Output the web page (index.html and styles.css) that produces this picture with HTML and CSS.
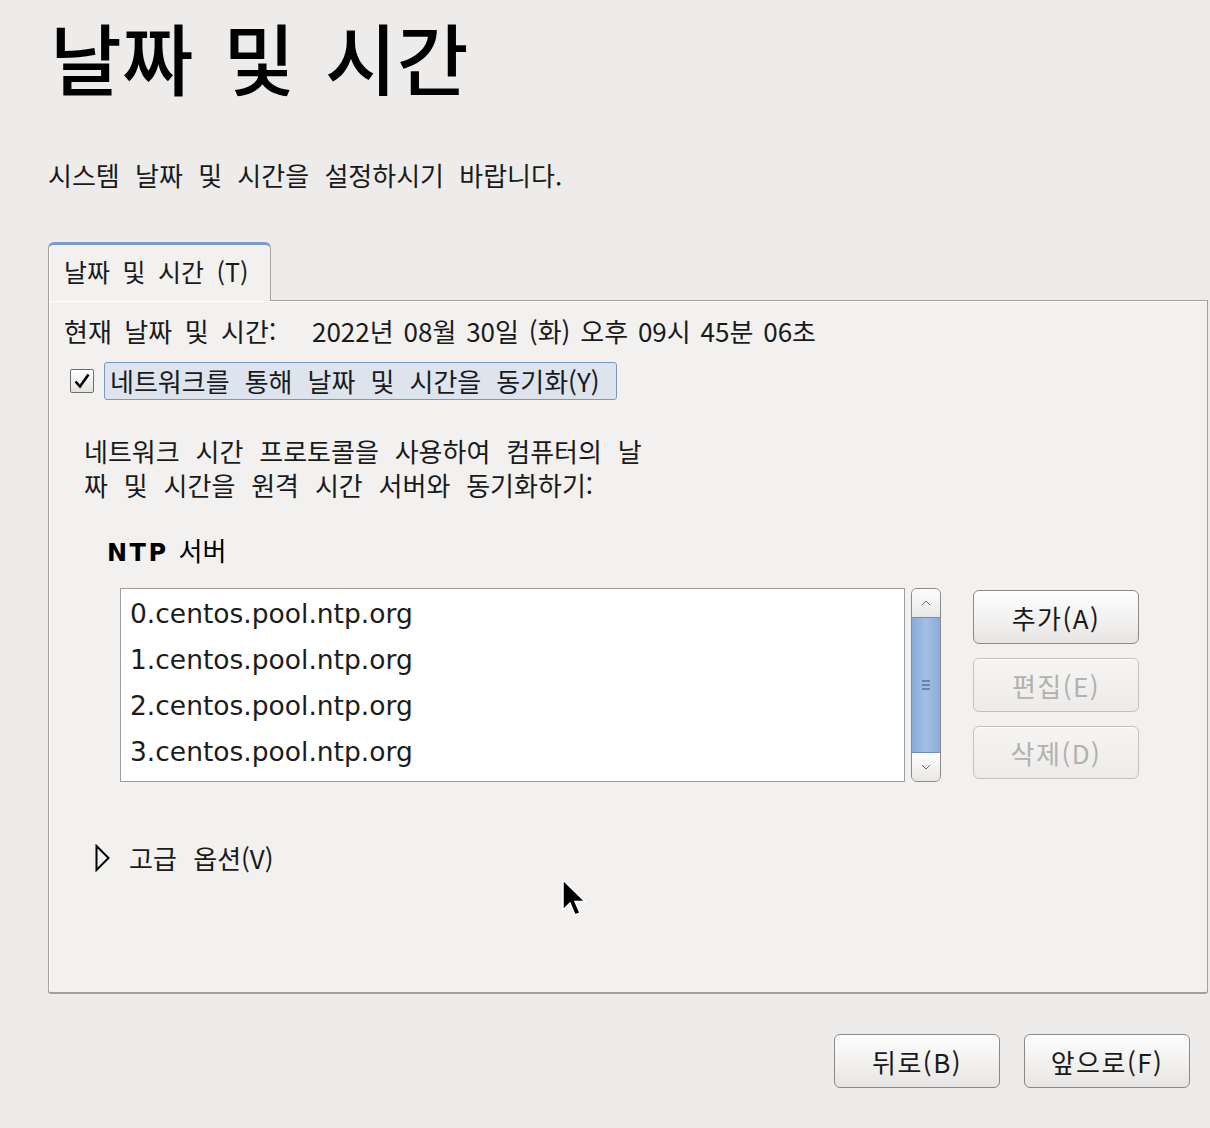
FILE: index.html
```html
<!DOCTYPE html>
<html lang="ko">
<head>
<meta charset="utf-8">
<title>날짜 및 시간</title>
<link rel="stylesheet" href="styles.css">
</head>
<body>
<div class="page">
  <h1 class="title">날짜 및 시간</h1>
  <p class="subtitle">시스템 날짜 및 시간을 설정하시기 바랍니다.</p>

  <div class="notebook">
    <div class="tabs">
      <div class="tab">날짜 및 시간 (T)</div>
    </div>
    <div class="panel">
      <div class="date-row">
        <span class="date-label">현재 날짜 및 시간:</span>
        <span class="date-value">2022년 08월 30일 (화) 오후 09시 45분 06초</span>
      </div>

      <div class="check-row">
        <span class="checkbox">
          <svg width="22" height="22" viewBox="0 0 22 22"><path d="M4.5 11.5 L9 16.5 L17.5 4.5" fill="none" stroke="#000" stroke-width="2.6" stroke-linejoin="miter"/></svg>
        </span>
        <span class="check-label">네트워크를 통해 날짜 및 시간을 동기화(Y)</span>
      </div>

      <p class="desc">네트워크 시간 프로토콜을 사용하여 컴퓨터의 날<br>짜 및 시간을 원격 시간 서버와 동기화하기:</p>

      <div class="ntp-title"><span class="ntp-bold">NTP</span> 서버</div>

      <div class="ntp-area">
        <div class="server-list">
          <div class="server">0.centos.pool.ntp.org</div>
          <div class="server">1.centos.pool.ntp.org</div>
          <div class="server">2.centos.pool.ntp.org</div>
          <div class="server">3.centos.pool.ntp.org</div>
        </div>
        <div class="scrollbar">
          <div class="sb-btn">
            <svg width="12" height="8" viewBox="0 0 12 8"><path d="M2 6 L6 2 L10 6" fill="none" stroke="#6a6866" stroke-width="1"/></svg>
          </div>
          <div class="sb-thumb">
            <svg width="10" height="12" viewBox="0 0 10 12"><path d="M1 2 H9 M1 6 H9 M1 10 H9" stroke="#3f4d63" stroke-width="1"/></svg>
          </div>
          <div class="sb-btn">
            <svg width="12" height="8" viewBox="0 0 12 8"><path d="M2 2 L6 6 L10 2" fill="none" stroke="#6a6866" stroke-width="1"/></svg>
          </div>
        </div>
        <div class="side-buttons">
          <button class="btn">추가(A)</button>
          <button class="btn disabled">편집(E)</button>
          <button class="btn disabled">삭제(D)</button>
        </div>
      </div>

      <div class="expander">
        <svg class="exp-arrow" width="16" height="28" viewBox="0 0 16 28"><path d="M1.5 2 L13.5 14 L1.5 26 Z" fill="none" stroke="#000" stroke-width="2"/></svg>
        <span class="exp-label">고급 옵션(V)</span>
      </div>
    </div>
  </div>

  <div class="footer">
    <button class="btn big">뒤로(B)</button>
    <button class="btn big">앞으로(F)</button>
  </div>

  <svg class="cursor" width="26" height="40" viewBox="0 0 26 40"><path d="M1 1 L1 31 L8 24 L13 36 L18 34 L13 22.5 L23 22.5 Z" fill="#000" stroke="#fff" stroke-width="1.5" stroke-linejoin="miter"/></svg>
</div>
</body>
</html>
```

FILE: styles.css
```css
html, body {
  margin: 0;
  padding: 0;
  background: #edeceb;
}

body {
  font-family: "Noto Sans CJK KR", "DejaVu Sans", sans-serif;
  color: #1a1a1a;
  font-size: 26px;
  word-spacing: 0.3em;
}

.page {
  position: relative;
  width: 1210px;
  height: 1128px;
  box-sizing: border-box;
  padding: 0 2px 0 48px;
  overflow: hidden;
}

.title {
  margin: 0 0 0 2px;
  font-size: 78px;
  line-height: 113px;
  font-weight: 500;
  color: #000;
  word-spacing: 8px;
  letter-spacing: 0;
}

.subtitle {
  margin: 45px 0 0 0;
  font-size: 26px;
  line-height: 34px;
  font-weight: 400;
  word-spacing: 8px;
}

.notebook {
  margin-top: 50px;
}

.tabs {
  display: flex;
}

.tab {
  position: relative;
  z-index: 1;
  width: 223px;
  height: 59px;
  margin-bottom: -1px;
  box-sizing: border-box;
  background: #f2f1f0;
  border: 1px solid #a3a19e;
  border-top: 3px solid #7d9dc8;
  border-bottom: none;
  border-radius: 6px 6px 0 0;
  box-shadow: inset 1px 0 0 #ffffff;
  padding: 9px 0 0 15px;
  line-height: 34px;
  font-size: 25px;
  word-spacing: 0.22em;
}

.panel {
  height: 694px;
  box-sizing: border-box;
  background: #f2f1f0;
  border: 1px solid #a3a19e;
  border-bottom: 2px solid #a3a19e;
  border-radius: 0 0 3px 3px;
  box-shadow: inset 1px 1px 0 #ffffff;
  padding: 13px 0 0 15px;
}

.date-row {
  display: flex;
  line-height: 34px;
}

.date-label {
  width: 248px;
  flex: none;
  word-spacing: 0.2em;
}

.date-value {
  word-spacing: 0.1em;
}

.check-row {
  display: flex;
  align-items: center;
  margin-top: 14px;
  height: 38px;
}

.checkbox {
  display: flex;
  align-items: center;
  justify-content: center;
  width: 24px;
  height: 24px;
  box-sizing: border-box;
  margin-left: 6px;
  border: 1px solid #6f6d6b;
  border-radius: 2px;
  background: linear-gradient(#ffffff, #e4e3e1);
}

.check-label {
  margin-left: 10px;
  width: 513px;
  height: 38px;
  box-sizing: border-box;
  border: 1px solid #7b97c0;
  border-radius: 3px;
  background: #dde4ee;
  padding-left: 5px;
  line-height: 36px;
  white-space: nowrap;
}

.desc {
  margin: 34px 0 0 20px;
  line-height: 34px;
  white-space: nowrap;
  word-spacing: 0.33em;
}

.ntp-title {
  margin: 31px 0 0 43px;
  height: 34px;
  line-height: 34px;
  color: #000;
  display: flex;
  align-items: baseline;
}

.ntp-bold {
  font-family: "DejaVu Sans", "Noto Sans CJK KR", sans-serif;
  font-weight: 700;
  font-size: 24px;
  line-height: 34px;
  letter-spacing: 2.5px;
  margin-right: 10px;
}

.ntp-area {
  display: flex;
  align-items: flex-start;
  margin: 21px 0 0 56px;
}

.server-list {
  width: 785px;
  height: 194px;
  box-sizing: border-box;
  background: #ffffff;
  border: 1px solid #9f9d9a;
  padding: 2px 0 0 9px;
  font-family: "DejaVu Sans", sans-serif;
  font-size: 26.5px;
  word-spacing: 0;
  color: #1c1c1c;
}

.server {
  height: 46px;
  line-height: 46px;
}

.scrollbar {
  margin-left: 6px;
  width: 30px;
  height: 194px;
  box-sizing: border-box;
  border: 1px solid #8d8b89;
  border-radius: 6px;
  overflow: hidden;
  display: flex;
  flex-direction: column;
  background: #e9e8e6;
}

.sb-btn {
  height: 28px;
  flex: none;
  display: flex;
  align-items: center;
  justify-content: center;
  background: linear-gradient(#fdfdfd, #e8e7e5);
}

.sb-thumb {
  flex: 1;
  display: flex;
  align-items: center;
  justify-content: center;
  background: linear-gradient(90deg, #89abd9, #a3bfe6 50%, #8cacd8);
  border-top: 1px solid #6e8fbe;
  border-bottom: 1px solid #6e8fbe;
}

.side-buttons {
  margin-left: 32px;
  margin-top: 2px;
  display: flex;
  flex-direction: column;
  gap: 14px;
}

.btn {
  width: 166px;
  height: 54px;
  box-sizing: border-box;
  border: 1px solid #8c8a88;
  border-radius: 6px;
  background: linear-gradient(#fdfdfd, #f3f2f1 50%, #e6e5e3);
  font-family: "Noto Sans CJK KR", "DejaVu Sans", sans-serif;
  font-size: 26px;
  letter-spacing: 1.5px;
  color: #1a1a1a;
  padding: 0;
  box-shadow: inset 0 1px 0 #ffffff;
}

.btn.disabled {
  border-color: #c2c0bd;
  color: #b3b1ae;
  background: linear-gradient(#f6f5f4, #ecebea);
}

.side-buttons .btn:nth-child(3) {
  height: 53px;
}

.expander {
  display: flex;
  align-items: center;
  margin: 59px 0 0 31px;
  height: 34px;
}

.exp-arrow {
  flex: none;
}

.exp-label {
  margin-left: 18px;
  line-height: 34px;
  word-spacing: 0.35em;
}

.footer {
  display: flex;
  justify-content: flex-end;
  gap: 24px;
  margin-top: 40px;
  padding-right: 18px;
}

.cursor {
  position: absolute;
  left: 562px;
  top: 879px;
}
```
